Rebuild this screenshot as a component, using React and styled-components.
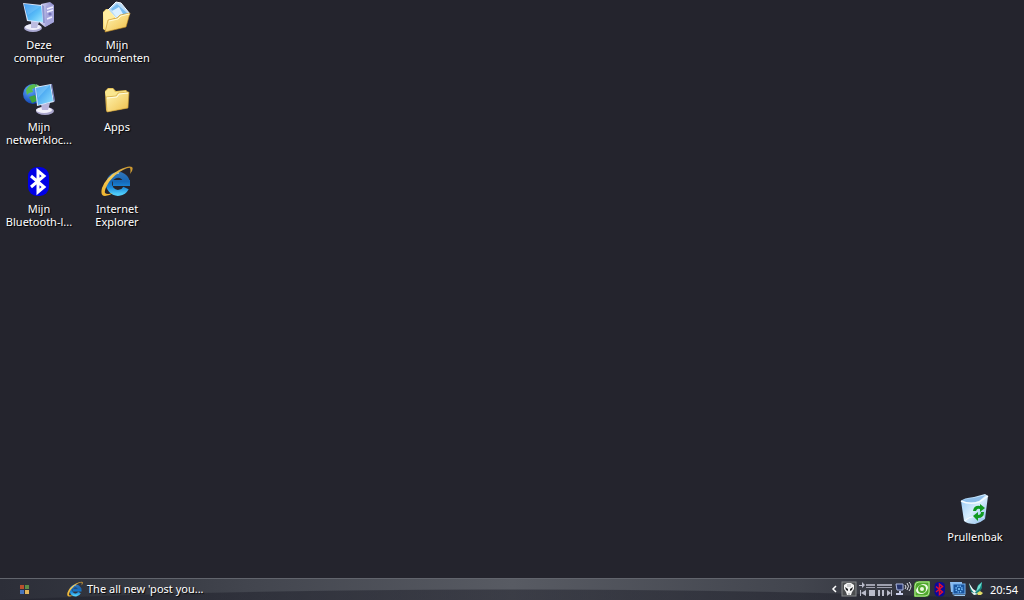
import styled, { createGlobalStyle } from 'styled-components';

const GlobalStyle = createGlobalStyle`
  body {
    margin: 0;
    background: #24242d;
    font-family: 'Noto Sans', 'Open Sans', sans-serif;
    font-size: 11px;
    color: #ffffff;
  }
`;

const Screen = styled.div`
  display: flex;
  flex-direction: column;
  min-height: 100vh;
`;

const Desktop = styled.main`
  flex: 1;
  display: flex;
  justify-content: space-between;
  padding: 1px 10px 0 0;
`;

const IconGrid = styled.div`
  display: grid;
  grid-template-columns: repeat(2, 78px);
  grid-auto-rows: 82px;
  align-content: start;
  align-items: start;
`;

const BinCorner = styled.div`
  display: flex;
  align-items: flex-end;
  padding-bottom: 35px;
`;

const Shortcut = styled.button`
  display: flex;
  flex-direction: column;
  align-items: center;
  gap: 5px;
  width: 78px;
  padding: 0 3px;
  border: 0;
  background: none;
  color: inherit;
  font: inherit;
  line-height: 13px;
  text-shadow: 1px 1px 1px #000000;
`;

const Label = styled.span`
  text-align: center;
`;

const Taskbar = styled.footer`
  display: flex;
  align-items: center;
  box-sizing: border-box;
  height: 22px;
  padding-bottom: 2px;
  border-top: 1px solid #62656d;
  background:
    radial-gradient(70vw 35px at 50% 45px, rgba(27, 28, 39, 0.48) 97%, transparent 100%),
    linear-gradient(90deg, #2c2e38 0%, #343740 12%, #42454e 24%, #585b63 50%, #42454e 78%, #30323c 90%, #262832 100%);
`;

const StartButton = styled.button`
  display: flex;
  justify-content: center;
  width: 50px;
  padding: 2px 0 0;
  border: 0;
  background: none;
`;

const Tasks = styled.nav`
  flex: 1;
  display: flex;
  padding-left: 17px;
`;

const Task = styled.button`
  display: flex;
  align-items: center;
  gap: 4px;
  padding: 0;
  border: 0;
  background: none;
  color: inherit;
  font: inherit;
  line-height: 16px;
  text-shadow: 1px 1px 1px #000000;
`;

const Tray = styled.div`
  display: flex;
  align-items: center;
  gap: 2px;
  padding-right: 6px;
`;

const TrayButton = styled.button`
  display: flex;
  padding: 0;
  border: 0;
  background: none;
`;

const Clock = styled.time`
  padding: 2px 0 0 4px;
  line-height: 16px;
`;

const ComputerIcon = () => (
  <svg width="32" height="32" viewBox="0 0 32 32" aria-hidden="true">
    <defs>
      <linearGradient id="pcScreen" x1="0" y1="0" x2="1" y2="1">
        <stop offset="0" stopColor="#2583ea" />
        <stop offset="0.6" stopColor="#5dc0f8" />
        <stop offset="1" stopColor="#a4eaff" />
      </linearGradient>
      <linearGradient id="pcTower" x1="0" y1="0" x2="1" y2="0">
        <stop offset="0" stopColor="#d8d8f6" />
        <stop offset="1" stopColor="#8585c4" />
      </linearGradient>
    </defs>
    <path d="M18 3 L27 1 L31 4 V21 L22 26 L17 22Z" fill="url(#pcTower)" />
    <path d="M23 5 L31 4 V21 L22 26Z" fill="#a5a5dc" />
    <path d="M24 8 L30 6 M24 11 L30 9 M24 18 L29 16" stroke="#eeeeff" strokeWidth="1.4" />
    <circle cx="27" cy="13" r="1.6" fill="#7373b8" />
    <ellipse cx="10" cy="27" rx="9" ry="4" fill="#aaa9d2" />
    <ellipse cx="10" cy="26" rx="8" ry="3" fill="#eeeefb" />
    <path d="M8 19 L16 21 L14 27 H8Z" fill="#bcbce0" />
    <path d="M0 2 L19 4 L21 22 L4 20Z" fill="#d5e3fa" />
    <path d="M19 4 L21 5 L22 22 L20 22Z" fill="#8c94cf" />
    <path d="M1 3 L18 5 L20 21 L5 19Z" fill="url(#pcScreen)" />
    <path d="M1 3 L18 5 L5 14Z" fill="#8fd3ff" opacity="0.35" />
  </svg>
);

const DocumentsIcon = () => (
  <svg width="32" height="32" viewBox="0 0 32 32" aria-hidden="true">
    <defs>
      <linearGradient id="docFolder" x1="0" y1="0" x2="1" y2="1">
        <stop offset="0" stopColor="#fff5b5" />
        <stop offset="1" stopColor="#f0bd44" />
      </linearGradient>
    </defs>
    <path d="M2 11 L5 8 L11 8 L13 10 L22 8 L25 11 L25 23 L5 30 L2 28Z" fill="#f7d977" />
    <path d="M7 9 L15 1 L20 2 L29 13 L20 22Z" fill="#b9dcf8" stroke="#f6fbff" strokeWidth="1" />
    <path d="M10 8 L16 3 L26 12 L18 17Z" fill="#79bcf0" />
    <path d="M11 10 L18 6 L22 13 L16 17Z" fill="#dcf0ff" />
    <path d="M2 12 L5 9 L8 9 L14 16 L8 20 L4 30Z" fill="#ffeda0" />
    <path d="M7 19 L16 17 L19 14 L29 12 L25 26 L4 31Z" fill="url(#docFolder)" stroke="#c68d23" strokeWidth="0.6" />
    <path d="M8 20 L17 18 L20 15 L28 13" fill="none" stroke="#fffbd5" strokeWidth="1" />
  </svg>
);

const NetworkIcon = () => (
  <svg width="32" height="32" viewBox="0 0 32 32" aria-hidden="true">
    <defs>
      <radialGradient id="netGlobe" cx="0.35" cy="0.3" r="0.75">
        <stop offset="0" stopColor="#62a8ff" />
        <stop offset="1" stopColor="#0b3fae" />
      </radialGradient>
      <linearGradient id="netScreen" x1="0" y1="0" x2="1" y2="1">
        <stop offset="0" stopColor="#2588ea" />
        <stop offset="1" stopColor="#8fe2ff" />
      </linearGradient>
    </defs>
    <circle cx="10" cy="11" r="10" fill="url(#netGlobe)" />
    <path d="M3 7 Q6 1 12 1 L14 4 L9 6 L10 9 L6 10 L4 12Z" fill="#58bd4c" />
    <path d="M6 14 L12 12 L14 18 L9 20Z" fill="#3fa33c" />
    <path d="M13 1 Q18 3 19 7 L15 6Z" fill="#8edc62" />
    <ellipse cx="22" cy="28" rx="9" ry="4" fill="#aaa6cc" />
    <ellipse cx="21" cy="27" rx="8" ry="3" fill="#f3f1fb" />
    <path d="M18 21 L27 20 L25 27 H19Z" fill="#b9b4dc" />
    <path d="M12 4 L28 1 L31 19 L14 23Z" fill="#d8e6fb" />
    <path d="M28 1 L29 1 L32 18 L31 19Z" fill="#8089c7" />
    <path d="M13 5 L27 2 L30 18 L15 22Z" fill="url(#netScreen)" />
    <path d="M13 5 L27 2 L15 15Z" fill="#9adbff" opacity="0.4" />
  </svg>
);

const FolderIcon = () => (
  <svg width="32" height="32" viewBox="0 0 32 32" aria-hidden="true">
    <defs>
      <linearGradient id="folderFront" x1="0" y1="0" x2="1" y2="1">
        <stop offset="0" stopColor="#fff6b4" />
        <stop offset="1" stopColor="#efbf4a" />
      </linearGradient>
    </defs>
    <path d="M4 8 L7 5 L12 5 L15 8 L25 7 L27 9 L27 25 L6 29 L5 27Z" fill="#e5c158" />
    <path d="M4 9 L7 6 L12 6 L14 9 L25 8 V12 L5 14Z" fill="#fae78f" />
    <path d="M5 14 L15 13 L17 10 L28 9 L27 25 L6 29Z" fill="url(#folderFront)" stroke="#c99b32" strokeWidth="0.6" />
    <path d="M6 15 L16 14 L18 11 L27 10" fill="none" stroke="#fffde0" strokeWidth="1" />
  </svg>
);

const BluetoothIcon = ({ size = 32, rune = '#ffffff', fill = '#0000e6' }) => (
  <svg width={size} height={size} viewBox="0 0 32 32" aria-hidden="true">
    <rect x="5" y="2" width="21" height="29" rx="9" fill={fill} />
    <path d="M8 11 L21 22 L15 27 V6 L21 11 L8 22" fill="none" stroke={rune} strokeWidth="3" />
  </svg>
);

const ExplorerIcon = ({ size = 32 }) => (
  <svg width={size} height={size} viewBox="0 0 32 32" aria-hidden="true">
    <defs>
      <linearGradient id={`ieBlue${size}`} gradientUnits="userSpaceOnUse" x1="16" y1="6" x2="16" y2="29">
        <stop offset="0" stopColor="#3576b8" />
        <stop offset="0.45" stopColor="#1668b8" />
        <stop offset="0.7" stopColor="#1a86d8" />
        <stop offset="1" stopColor="#4fcdfb" />
      </linearGradient>
      <linearGradient id={`ieGold${size}`} x1="0" y1="1" x2="1" y2="0">
        <stop offset="0" stopColor="#f0b42c" />
        <stop offset="0.5" stopColor="#f3cb5c" />
        <stop offset="1" stopColor="#c8922a" />
      </linearGradient>
    </defs>
    <path
      d="M29 18 H12 M26 19 A9 9 0 1 0 25 23"
      fill="none"
      stroke={`url(#ieBlue${size})`}
      strokeWidth="6"
    />
    <path d="M10 12 Q13 8 18 8" fill="none" stroke="#8fc3ee" strokeWidth="1.5" />
    <path
      d="M29 9 Q33 4 31 2 Q28 0 18 5 Q5 12 1 23 Q-1 31 4 31 Q8 31 12 28 Q6 30 4 28 Q3 25 8 17 Q14 9 22 5 Q28 2 29 3 Q30 5 29 9Z"
      fill={`url(#ieGold${size})`}
    />
  </svg>
);

const BinIcon = () => (
  <svg width="32" height="32" viewBox="0 0 32 32" aria-hidden="true">
    <defs>
      <linearGradient id="binBody" x1="0" y1="0" x2="1" y2="1">
        <stop offset="0" stopColor="#8fc4f3" />
        <stop offset="0.5" stopColor="#d7edfd" />
        <stop offset="1" stopColor="#84b6e6" />
      </linearGradient>
    </defs>
    <path d="M2 8 Q4 5 15 4 L26 1 L29 3 L26 26 Q21 30 16 31 Q8 31 5 28Z" fill="url(#binBody)" />
    <path d="M3 8 Q6 6 15 5 L27 2 L20 8 Q11 11 3 8Z" fill="#8dbde9" />
    <path d="M2 8 Q11 12 20 9 L29 3" fill="none" stroke="#f5fbff" strokeWidth="1.5" />
    <path d="M6 28 Q10 22 25 24" fill="none" stroke="#ffffff" strokeWidth="1.2" opacity="0.8" />
    <path d="M14 18 Q15 12 21 13 L21 11 L26 15 L21 19 L21 16 Q18 15 17 18Z" fill="#109a20" />
    <path d="M25 19 Q25 25 19 25 L19 28 L14 23 L19 19 L19 22 Q22 22 22 19Z" fill="#109a20" />
  </svg>
);

const StartIcon = () => (
  <svg width="10" height="10" viewBox="0 0 10 10" aria-hidden="true">
    <rect width="4" height="4" fill="#b9502d" />
    <rect x="5" width="4" height="4" fill="#5d8c47" />
    <rect y="5" width="4" height="4" fill="#4775bd" />
    <rect x="5" y="5" width="4" height="4" fill="#e0b55c" />
  </svg>
);

const ChevronIcon = () => (
  <svg width="8" height="8" viewBox="0 0 8 8" aria-hidden="true">
    <path d="M5 1 L2 4 L5 7" fill="none" stroke="#ffffff" strokeWidth="1.5" />
  </svg>
);

const AlienIcon = () => (
  <svg width="16" height="16" viewBox="0 0 16 16" aria-hidden="true">
    <rect x="1" y="1" width="14" height="14" fill="#4b4d4f" stroke="#85888a" />
    <path d="M3 4 L6 2 H10 L13 4 V8 L11 11 L10 14 H6 L5 11 L3 8Z" fill="#f4f4f4" />
    <path d="M4 6 L7 8 V10 L5 9Z M12 6 L9 8 V10 L11 9Z" fill="#202225" />
    <path d="M7 3 V6 M9 3 V6 M8 12 V14" stroke="#a2a4a6" />
  </svg>
);

const MediaIcon = () => (
  <svg width="34" height="16" viewBox="0 0 34 16" aria-hidden="true">
    <g fill="#babccb">
      <path d="M0 4 H3 V1 L6 4 L3 7 V5 H0Z" />
      <path d="M7 3 H16 V5 H7Z M7 6 H16 V7 H7Z M18 3 H33 V5 H18Z M18 6 H33 V7 H18Z" opacity="0.8" />
      <path d="M1 9 H2 V15 H1Z M7 9 V15 L2 12Z" />
      <path d="M10 9 H16 V15 H10Z" />
      <path d="M19 9 H21 V15 H19Z M23 9 H25 V15 H23Z" />
      <path d="M28 9 L32 12 L28 15Z M32 9 H33 V15 H32Z" />
    </g>
  </svg>
);

const NetTrayIcon = () => (
  <svg width="17" height="16" viewBox="0 0 17 16" aria-hidden="true">
    <path d="M1 3 H8 V9 H2Z" fill="#26346c" stroke="#aeb9e2" />
    <path d="M4 10 H6 V12 H8 V14 H1 V12 H4Z" fill="#cbd0ec" />
    <path d="M10 4 Q12 6 10 8 M12 2 Q15 5 12 9 M14 1 Q18 5 14 10" fill="none" stroke="#dfe0e7" />
  </svg>
);

const EyeIcon = () => (
  <svg width="16" height="16" viewBox="0 0 16 16" aria-hidden="true">
    <path d="M5 0 H16 V11 Q16 16 11 16 H0 V5 Q0 0 5 0Z" fill="#4fa82d" />
    <path d="M5 1 H15 V11 Q15 15 11 15 H1 V5 Q1 1 5 1Z" fill="none" stroke="#b4e594" />
    <path d="M2 9 Q4 4 9 3 Q14 3 14 7 Q12 13 7 13 Q2 13 2 9Z" fill="#f0fbe8" />
    <circle cx="8" cy="8" r="4" fill="#4fa82d" />
    <circle cx="8" cy="8" r="2" fill="#eaf9dc" />
  </svg>
);

const ScreenTrayIcon = () => (
  <svg width="16" height="16" viewBox="0 0 16 16" aria-hidden="true">
    <path d="M0 1 H12 V3 H3 V11 H1Z" fill="#8cbdf0" />
    <rect x="3" y="3" width="12" height="10" fill="#1a559f" stroke="#76b2ee" />
    <circle cx="9" cy="8" r="3" fill="none" stroke="#7ac5ff" strokeWidth="1.5" strokeDasharray="1.2 1.2" />
    <circle cx="9" cy="8" r="1" fill="#8bd2ff" />
    <path d="M3 14 H15 V15 H5Z" fill="#9bc9f2" />
  </svg>
);

const BirdIcon = () => (
  <svg width="16" height="16" viewBox="0 0 16 16" aria-hidden="true">
    <path d="M1 2 L5 9 L8 10 L10 4 L14 1 L14 7 L11 12 L7 14 Q3 12 2 8Z" fill="#16807a" />
    <path d="M1 2 L5 8 L8 10 L7 12 Q3 10 1 2Z" fill="#f3f8f8" />
    <path d="M14 1 L10 5 L8 11 L12 7Z" fill="#72ddd2" />
    <path d="M3 11 L7 12 L10 13 L6 14Z" fill="#eef5f4" />
    <path d="M9 12 L12 10 L15 12 L13 14 H10Z" fill="#e2dc69" />
  </svg>
);

const shortcuts = [
  { label: 'Deze computer', Icon: ComputerIcon },
  { label: 'Mijn documenten', Icon: DocumentsIcon },
  { label: 'Mijn netwerkloc...', Icon: NetworkIcon },
  { label: 'Apps', Icon: FolderIcon },
  { label: 'Mijn Bluetooth-l...', Icon: BluetoothIcon },
  { label: 'Internet Explorer', Icon: ExplorerIcon },
];

const App = () => {
  return (
    <>
      <GlobalStyle />
      <Screen>
        <Desktop>
          <IconGrid>
            {shortcuts.map(({ label, Icon }) => (
              <Shortcut key={label} type="button">
                <Icon />
                <Label>{label}</Label>
              </Shortcut>
            ))}
          </IconGrid>
          <BinCorner>
            <Shortcut type="button">
              <BinIcon />
              <Label>Prullenbak</Label>
            </Shortcut>
          </BinCorner>
        </Desktop>
        <Taskbar>
          <StartButton type="button" aria-label="Start">
            <StartIcon />
          </StartButton>
          <Tasks>
            <Task type="button">
              <ExplorerIcon size={16} />
              The all new 'post you...
            </Task>
          </Tasks>
          <Tray>
            <TrayButton type="button" aria-label="Verborgen pictogrammen">
              <ChevronIcon />
            </TrayButton>
            <TrayButton type="button" aria-label="Foobar">
              <AlienIcon />
            </TrayButton>
            <TrayButton type="button" aria-label="Afspelen">
              <MediaIcon />
            </TrayButton>
            <TrayButton type="button" aria-label="Netwerk">
              <NetTrayIcon />
            </TrayButton>
            <TrayButton type="button" aria-label="Beeldscherm">
              <EyeIcon />
            </TrayButton>
            <TrayButton type="button" aria-label="Bluetooth">
              <BluetoothIcon size={16} rune="#e01030" fill="#0a0a9c" />
            </TrayButton>
            <TrayButton type="button" aria-label="Systeem">
              <ScreenTrayIcon />
            </TrayButton>
            <TrayButton type="button" aria-label="Berichten">
              <BirdIcon />
            </TrayButton>
            <Clock>20:54</Clock>
          </Tray>
        </Taskbar>
      </Screen>
    </>
  );
};

export default App;
